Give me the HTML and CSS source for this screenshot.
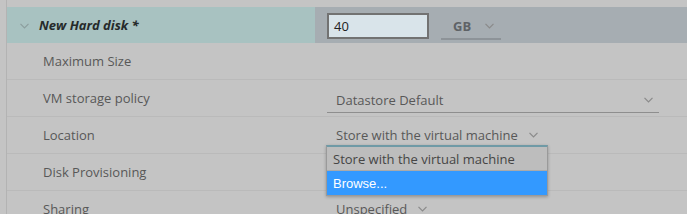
FILE: index.html
```html
<!DOCTYPE html>
<html>
<head>
<meta charset="utf-8">
<link rel="stylesheet" href="styles.css">
</head>
<body>
<div class="panel">
  <div class="row-head">
    <div class="head-label">
      <svg class="chev head-chev" width="9" height="6" viewBox="0 0 9 6"><polyline points="0.5,0.8 4.5,4.8 8.5,0.8" fill="none" stroke="#8c9e9e" stroke-width="1.2"/></svg>
      <span class="head-title">New Hard disk *</span>
    </div>
    <div class="head-value">
      <div class="num-input">40</div>
      <div class="select select-gb"><span>GB</span><svg class="chev" width="9" height="6" viewBox="0 0 9 6"><polyline points="0.5,0.8 4.5,4.8 8.5,0.8" fill="none" stroke="#8a8a8a" stroke-width="1.2"/></svg></div>
    </div>
  </div>
  <div class="row">
    <div class="label">Maximum Size</div>
    <div class="value"></div>
  </div>
  <div class="row">
    <div class="label">VM storage policy</div>
    <div class="value">
      <div class="select select-wide"><span>Datastore Default</span><svg class="chev" width="9" height="6" viewBox="0 0 9 6"><polyline points="0.5,0.8 4.5,4.8 8.5,0.8" fill="none" stroke="#8a8a8a" stroke-width="1.2"/></svg></div>
    </div>
  </div>
  <div class="row">
    <div class="label">Location</div>
    <div class="value value-loc">
      <div class="select select-plain"><span>Store with the virtual machine</span><svg class="chev" width="9" height="6" viewBox="0 0 9 6"><polyline points="0.5,0.8 4.5,4.8 8.5,0.8" fill="none" stroke="#8a8a8a" stroke-width="1.2"/></svg></div>
      <div class="dropdown">
        <div class="opt opt-current">Store with the virtual machine</div>
        <div class="opt opt-hi">Browse...</div>
      </div>
    </div>
  </div>
  <div class="row">
    <div class="label">Disk Provisioning</div>
    <div class="value"></div>
  </div>
  <div class="row">
    <div class="label">Sharing</div>
    <div class="value">
      <div class="select select-plain"><span>Unspecified</span><svg class="chev" width="9" height="6" viewBox="0 0 9 6"><polyline points="0.5,0.8 4.5,4.8 8.5,0.8" fill="none" stroke="#8a8a8a" stroke-width="1.2"/></svg></div>
    </div>
  </div>
</div>
</body>
</html>
```

FILE: styles.css
```css
html, body {
  margin: 0;
  padding: 0;
  background: #c4c4c4;
  overflow: hidden;
}
body {
  font-family: "Open Sans", "Lato", sans-serif;
  font-size: 13px;
  color: #555;
  height: 214px;
}
.panel {
  margin-left: 6px;
  border-left: 1px solid #b3b3b3;
  padding-top: 7px;
  height: 214px;
  box-sizing: border-box;
  overflow: hidden;
}
.row-head {
  display: flex;
  height: 36px;
}
.head-label {
  width: 308px;
  background: #a8c2c1;
  display: flex;
  align-items: center;
  padding-left: 13px;
  box-sizing: border-box;
}
.head-chev {
  margin-right: 10px;
  margin-top: 1px;
}
.head-title {
  font-style: italic;
  font-weight: 700;
  color: #262a2a;
}
.head-value {
  flex: 1;
  background: #a6adb2;
  display: flex;
  align-items: center;
  padding-left: 12px;
}
.num-input {
  width: 93px;
  height: 22px;
  border: 2px solid #727272;
  background: #d9e4ea;
  color: #222;
  display: flex;
  align-items: center;
  padding-left: 5px;
  margin-top: 2px;
  margin-right: 12px;
}
.row {
  display: flex;
  height: 36px;
  border-bottom: 1px solid #bababa;
}
.label {
  width: 308px;
  padding-left: 36px;
  box-sizing: border-box;
  color: #585858;
  font-weight: 500;
  display: flex;
  align-items: center;
}
.value {
  flex: 1;
  padding-left: 12px;
  display: flex;
  align-items: center;
  font-weight: 500;
}
.value-loc {
  position: relative;
}
.select {
  display: flex;
  align-items: center;
  padding-left: 9px;
  color: #585858;
  box-sizing: border-box;
}
.select .chev {
  margin-left: 11px;
}
.select-gb {
  width: 60px;
  height: 26px;
  margin-top: 4px;
  padding-left: 12px;
  border-bottom: 2px solid #8d9398;
  color: #5e6266;
  font-weight: 700;
}
.select-gb .chev { margin-left: 14px; }
.select-wide {
  width: 332px;
  height: 26px;
  margin-top: 4px;
  border-bottom: 1px solid #8e8e8e;
  justify-content: space-between;
  padding-right: 6px;
}
.dropdown {
  position: absolute;
  left: 11px;
  top: 28px;
  width: 220px;
  border: 1px solid #9a9a9a;
  border-top: 2px solid #6f9aa6;
  background: #c2c2c2;
  box-shadow: 0 1px 3px rgba(0,0,0,0.25);
  z-index: 2;
}
.opt {
  height: 24px;
  display: flex;
  align-items: center;
  padding-left: 6px;
}
.opt-current {
  color: #454545;
  background: #bdbdbd;
  border-bottom: 1px solid #aaaaaa;
  height: 23px;
}
.opt-hi {
  background: #3399ff;
  color: #fff;
  font-weight: 400;
  font-family: "Liberation Sans", Arial, sans-serif;
}
```
